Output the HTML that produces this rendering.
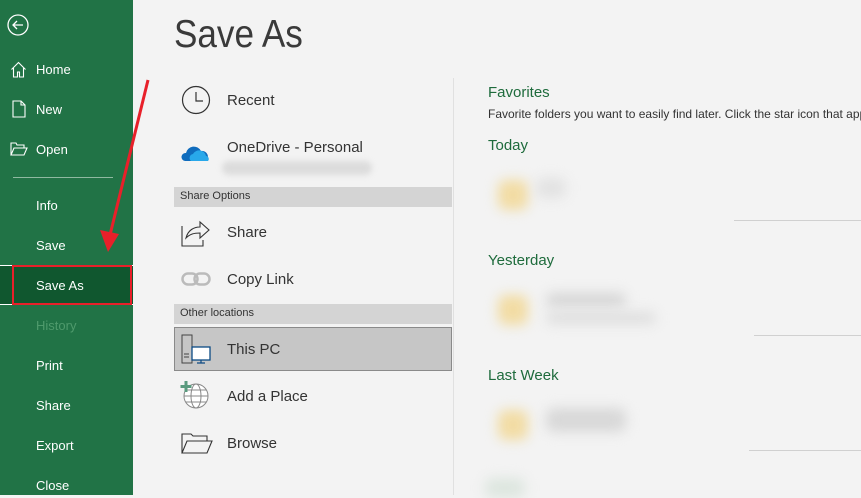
<!DOCTYPE html>
<html><head><meta charset="utf-8"><style>
*{margin:0;padding:0;box-sizing:border-box}
body{width:861px;height:495px;overflow:hidden;background:#f3f3f3;font-family:"Segoe UI","Liberation Sans",sans-serif;position:relative}
.side{position:absolute;left:0;top:0;width:133px;height:495px;background:#217346;color:#fff}
.si{position:absolute;left:36px;font-size:13px;color:#fff}
.ic{position:absolute;left:10px}
.title{position:absolute;left:174px;top:15px;font-size:39px;line-height:1;color:#3a3a3a;font-family:"Liberation Sans",sans-serif;transform:scaleX(0.9);transform-origin:left top;white-space:nowrap}
.mi{position:absolute;left:227px;font-size:15px;color:#333}
.hdr{position:absolute;left:174px;width:278px;height:20px;background:#d4d4d4;font-size:11px;color:#333;padding:3px 0 0 6px}
.g{position:absolute;left:488px;color:#1e6b3c;font-size:15px}
.blur{position:absolute;filter:blur(6px);border-radius:8px}
.line{position:absolute;height:1px;background:#d0d0d0}
</style></head><body>
<div class="side">
<svg class="ic" style="left:7px;top:14px" width="22" height="22" viewBox="0 0 22 22"><circle cx="11" cy="11" r="10" fill="none" stroke="#fff" stroke-width="1.3"/><path d="M16 11H6M10 7l-4 4 4 4" fill="none" stroke="#fff" stroke-width="1.3"/></svg>
<svg class="ic" style="top:61px" width="17" height="17" viewBox="0 0 17 17"><path d="M1.5 8.5L8.5 1.5l7 7M3.5 7v9h4v-5h2v5h4V7" fill="none" stroke="#fff" stroke-width="1.1"/></svg>
<div class="si" style="top:62px">Home</div>
<svg class="ic" style="left:12px;top:100px" width="14" height="18" viewBox="0 0 14 18"><path d="M1 1h8l4 4v12H1z M9 1v4h4" fill="none" stroke="#fff" stroke-width="1.1"/></svg>
<div class="si" style="top:102px">New</div>
<svg class="ic" style="top:142px" width="18" height="14" viewBox="0 0 18 14"><path d="M1 13V1h5l1 2h7v3M1 13l3-7h13l-3 7z" fill="none" stroke="#fff" stroke-width="1.1"/></svg>
<div class="si" style="top:142px">Open</div>
<div style="position:absolute;left:13px;top:177px;width:100px;height:1px;background:#8fb9a0"></div>
<div class="si" style="top:198px">Info</div>
<div class="si" style="top:238px">Save</div>
<div style="position:absolute;left:0;top:265px;width:133px;height:40px;background:#10572f;border-top:1px solid #fff;border-bottom:1px solid #fff"></div>
<div style="position:absolute;left:12px;top:265px;width:120px;height:40px;border:2px solid #e8202a"></div>
<div class="si" style="top:278px">Save As</div>
<div class="si" style="top:318px;color:#4f9a6c">History</div>
<div class="si" style="top:358px">Print</div>
<div class="si" style="top:398px">Share</div>
<div class="si" style="top:438px">Export</div>
<div class="si" style="top:478px">Close</div>
</div>
<svg style="position:absolute;left:0;top:0" width="861" height="495"><path d="M148 80 L110 235" stroke="#e8202a" stroke-width="3"/><path d="M100 230 L108 252 L119 234 Z" fill="#e8202a"/></svg>
<div class="title">Save As</div>
<div style="position:absolute;left:453px;top:78px;width:1px;height:417px;background:#e0e0e0"></div>
<svg style="position:absolute;left:181px;top:85px" width="30" height="30"><circle cx="15" cy="15" r="13.5" fill="none" stroke="#333" stroke-width="1.2"/><path d="M15 7v9h7" fill="none" stroke="#333" stroke-width="1.2"/></svg>
<div class="mi" style="top:92px">Recent</div>
<svg style="position:absolute;left:181px;top:143px" width="30" height="20" viewBox="0 0 30 20"><path d="M4 18a4 4 0 0 1 1-8 8 8 0 0 1 15-2 6 6 0 0 1 7 6 4 4 0 0 1-1 4z" fill="#0f6cbd"/><path d="M10 18a4 4 0 0 1 2-7 7 7 0 0 1 13 2 3 3 0 0 1 2 5z" fill="#28a8ea"/></svg>
<div class="mi" style="top:139px">OneDrive - Personal</div>
<div class="blur" style="left:222px;top:161px;width:150px;height:14px;background:#dcdcdc;filter:blur(3px)"></div>
<div class="hdr" style="top:187px">Share Options</div>
<svg style="position:absolute;left:181px;top:218px" width="30" height="29" viewBox="0 0 30 29"><path d="M1 8v20h21v-6M5 20c2-8 8-11 14-11V4l9 8-9 8v-5c-6 0-10 1-14 5z" fill="none" stroke="#333" stroke-width="1.1"/></svg>
<div class="mi" style="top:224px">Share</div>
<svg style="position:absolute;left:181px;top:272px" width="30" height="14" viewBox="0 0 30 14"><rect x="1.5" y="1.5" width="15" height="11" rx="5.5" fill="none" stroke="#bbb" stroke-width="2.5"/><rect x="13.5" y="1.5" width="15" height="11" rx="5.5" fill="none" stroke="#bbb" stroke-width="2.5"/></svg>
<div class="mi" style="top:271px">Copy Link</div>
<div class="hdr" style="top:304px">Other locations</div>
<div style="position:absolute;left:174px;top:327px;width:278px;height:44px;background:#c6c6c6;border:1px solid #8a8a8a"></div>
<svg style="position:absolute;left:181px;top:334px" width="32" height="30" viewBox="0 0 32 30"><path d="M1 1h10v28H1z M3 20h5M3 23h5" fill="none" stroke="#444" stroke-width="1"/><rect x="11" y="13" width="18" height="13" fill="#fff" stroke="#0c4a84" stroke-width="1.3"/><path d="M20 26v3M16 29h8" stroke="#0c4a84" stroke-width="1.2"/></svg>
<div class="mi" style="top:341px">This PC</div>
<svg style="position:absolute;left:179px;top:380px" width="32" height="30" viewBox="0 0 32 30"><circle cx="17" cy="16" r="12" fill="#fff" stroke="#888" stroke-width="1"/><ellipse cx="17" cy="16" rx="5" ry="12" fill="none" stroke="#888"/><path d="M5 16h24M7 10h20M7 22h20" stroke="#888"/><path d="M7 1v11M1.5 6.5h11" stroke="#5a9a7e" stroke-width="3"/></svg>
<div class="mi" style="top:388px">Add a Place</div>
<svg style="position:absolute;left:181px;top:432px" width="32" height="22" viewBox="0 0 32 22"><path d="M1 21V2h9l2 2h14v5M1 21l5-12h25l-5 12z" fill="none" stroke="#333" stroke-width="1.1"/></svg>
<div class="mi" style="top:435px">Browse</div>
<div class="g" style="top:84px">Favorites</div>
<div style="position:absolute;left:488px;top:107px;font-size:12px;color:#333;white-space:nowrap">Favorite folders you want to easily find later. Click the star icon that appears</div>
<div class="g" style="top:137px">Today</div>
<div class="blur" style="left:498px;top:180px;width:30px;height:30px;background:#f2dca4"></div>
<div class="blur" style="left:536px;top:178px;width:30px;height:20px;background:#e2e2e2"></div>
<div class="line" style="left:734px;top:220px;width:127px"></div>
<div class="g" style="top:252px">Yesterday</div>
<div class="blur" style="left:498px;top:295px;width:30px;height:30px;background:#f2dca4"></div>
<div class="blur" style="left:546px;top:293px;width:80px;height:14px;background:#d6d6d6"></div>
<div class="blur" style="left:546px;top:312px;width:110px;height:12px;background:#dedede"></div>
<div class="line" style="left:754px;top:335px;width:107px"></div>
<div class="g" style="top:367px">Last Week</div>
<div class="blur" style="left:498px;top:410px;width:30px;height:30px;background:#f2dca4"></div>
<div class="blur" style="left:546px;top:408px;width:80px;height:24px;background:#d8d8d8"></div>
<div class="line" style="left:749px;top:450px;width:112px"></div>
<div class="blur" style="left:485px;top:478px;width:40px;height:20px;background:#dde6df"></div>
</body></html>
